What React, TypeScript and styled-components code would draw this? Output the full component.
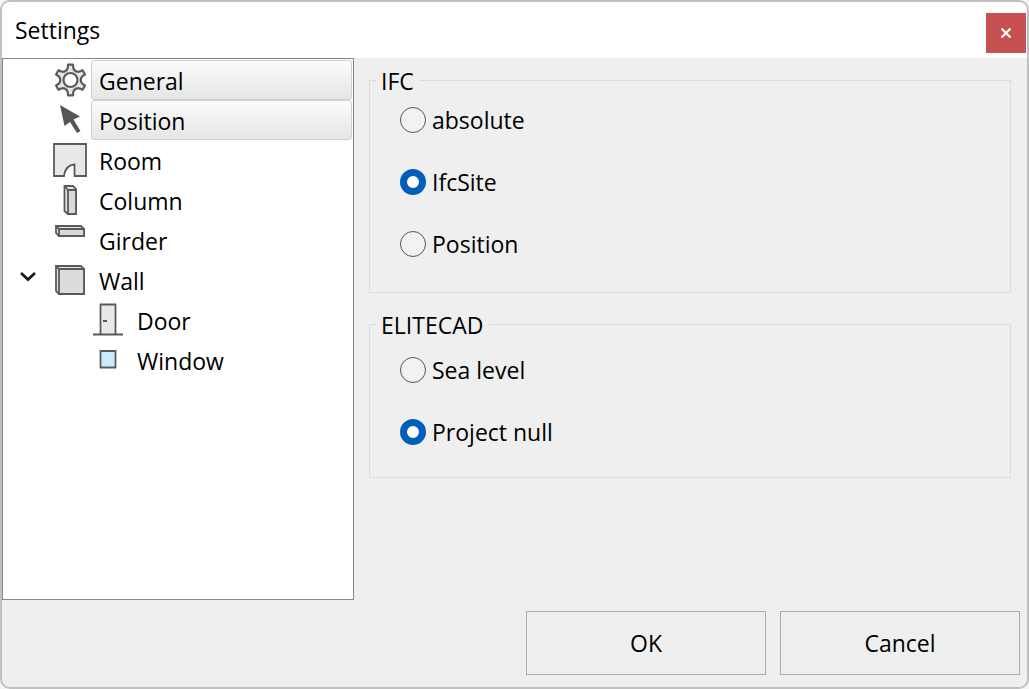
import React, { useState } from "react";
import styled, { createGlobalStyle } from "styled-components";

const GlobalStyle = createGlobalStyle`
  *, *::before, *::after { box-sizing: border-box; }
  body { margin: 0; background: #f4f4f4; }
  body, button, input { font-family: "Open Sans", "Noto Sans", sans-serif; font-size: 23px; line-height: 32px; color: #000; }
`;

const Dialog = styled.div`
  display: flex;
  flex-direction: column;
  min-height: 100vh;
  border: 2px solid #c0c0c0;
  border-radius: 10px;
  background: #efefef;
  overflow: hidden;
`;

const TitleBar = styled.header`
  display: flex;
  align-items: center;
  justify-content: space-between;
  height: 56px;
  padding: 0 1px 0 13px;
  background: #fff;
`;

const Title = styled.h1`
  margin: 0;
  font-size: 23px;
  font-weight: 400;
`;

const CloseButton = styled.button`
  display: flex;
  align-items: center;
  justify-content: center;
  align-self: flex-end;
  width: 40px;
  height: 40px;
  margin-bottom: 5px;
  padding: 0;
  border: 0;
  background: #c75050;
`;

const Main = styled.main`
  display: flex;
  flex: 1;
`;

const Tree = styled.nav`
  flex: 0 0 352px;
  padding: 1px;
  border: 1px solid #828790;
  background: #fff;
`;

const TreeList = styled.ul`
  margin: 0;
  padding: 0;
  list-style: none;
`;

const TreeRow = styled.div<{ $level: number }>`
  display: flex;
  height: 40px;
  padding-left: ${(p) => (p.$level ? 85 : 0)}px;
`;

const Expander = styled.button`
  display: flex;
  width: 47px;
  padding: 10px 0 0 16px;
  border: 0;
  background: none;
`;

const ExpanderSpace = styled.span`
  width: 47px;
`;

const IconBox = styled.span`
  display: flex;
  width: 40px;
`;

const TreeLabel = styled.button<{ $active: boolean }>`
  flex: 1;
  padding: 2px 7px 0;
  border: 1px solid ${(p) => (p.$active ? "#d0d0d0" : "transparent")};
  border-radius: 3px;
  background: ${(p) => (p.$active ? "linear-gradient(#fcfcfc, #e5e5e5)" : "none")};
  text-align: left;
`;

const Panel = styled.section`
  display: flex;
  flex: 1;
  flex-direction: column;
  gap: 14px;
  padding: 5px 16px 16px 15px;
`;

const Group = styled.fieldset<{ $top: number; $bottom: number }>`
  min-width: 0;
  margin: 0;
  padding: ${(p) => p.$top}px 30px ${(p) => p.$bottom}px;
  border: 1px solid #dcdcdc;
`;

const Legend = styled.legend`
  margin-left: -24px;
  padding: 2px 6px 0 5px;
`;

const Options = styled.div`
  display: flex;
  flex-direction: column;
  align-items: flex-start;
  gap: 30px;
`;

const Option = styled.label`
  display: flex;
  align-items: center;
  gap: 6px;
`;

const Radio = styled.input`
  appearance: none;
  width: 26px;
  height: 26px;
  margin: 0;
  border: 1px solid #565656;
  border-radius: 50%;
  background: #f2f2f2;

  &:checked {
    border: 7px solid #005fb8;
    background: #fff;
  }
`;

const Footer = styled.footer`
  display: flex;
  justify-content: flex-end;
  gap: 14px;
  padding: 11px 7px 12px;
`;

const ActionButton = styled.button`
  width: 240px;
  height: 64px;
  padding: 0;
  border: 1px solid #adadad;
  background: #efefef;
`;

type IconName = "gear" | "arrow" | "room" | "column" | "girder" | "wall" | "door" | "window";

const gearPath = (() => {
  const pts: string[] = [];
  for (let i = 0; i < 6; i++) {
    const profile: [number, number][] = [[-22, 10.5], [-14, 12], [-9, 15.5], [9, 15.5], [14, 12], [22, 10.5]];
    profile.forEach(([deg, r]) => {
      const a = ((i * 60 - 90 + deg) * Math.PI) / 180;
      pts.push(`${(19.5 + r * Math.cos(a)).toFixed(2)} ${(20 + r * Math.sin(a)).toFixed(2)}`);
    });
  }
  return `M${pts.join("L")}Z`;
})();

const shapes: Record<IconName, React.ReactNode> = {
  gear: (
    <>
      <path d={gearPath} fill="#e4e4e4" strokeLinejoin="round" />
      <circle cx="19.5" cy="20" r="7" fill="#fff" />
    </>
  ),
  arrow: <path d="M9 5L29 16.500L22.500 19.500L29.500 31L26 33L19 22L13.500 26Z" fill="#555" stroke="none" />,
  room: <path d="M3 4H35V36H23.500V24.500Q14.500 25 13 36H3Z" fill="#e8e8e8" />,
  column: (
    <>
      <path d="M13.500 6H22L25 9V34H17L13.500 31Z" fill="#e6e6e6" />
      <path d="M17 10H25V34H17Z" fill="#d9d9d9" />
      <path d="M13.500 6L17 10" />
    </>
  ),
  girder: (
    <>
      <path d="M5 6H30L33 9V16H8L5 13Z" fill="#e6e6e6" />
      <path d="M8 9H33V16H8Z" fill="#d9d9d9" />
      <path d="M5 6L8 9" />
    </>
  ),
  wall: (
    <>
      <path d="M5 6H30L33 9V34H8L5 31Z" fill="#e6e6e6" />
      <path d="M8 9H33V34H8Z" fill="#dcdcdc" />
      <path d="M5 6L8 9" />
    </>
  ),
  door: (
    <>
      <path d="M11.500 34V4.500H26.500V34" fill="#e8e8e8" />
      <path d="M4 34.500H34M14 21H18" />
    </>
  ),
  window: <path d="M11.500 11H26.500V27.500H11.500Z" fill="#cceaff" />,
};

const Icon = ({ name }: { name: IconName }) => (
  <svg width="38" height="40" viewBox="0 0 38 40" fill="none" stroke="#5a5a5a" strokeWidth={name === "gear" ? 2.2 : 1.8} aria-hidden="true">
    {shapes[name]}
  </svg>
);

interface Item {
  label: string;
  icon: IconName;
  active?: boolean;
  children?: Item[];
}

const items: Item[] = [
  { label: "General", icon: "gear", active: true },
  { label: "Position", icon: "arrow", active: true },
  { label: "Room", icon: "room" },
  { label: "Column", icon: "column" },
  { label: "Girder", icon: "girder" },
  {
    label: "Wall",
    icon: "wall",
    children: [
      { label: "Door", icon: "door" },
      { label: "Window", icon: "window" },
    ],
  },
];

const TreeItem = ({ item, level = 0 }: { item: Item; level?: number }) => {
  const [open, setOpen] = useState(true);
  return (
    <li>
      <TreeRow $level={level}>
        {item.children ? (
          <Expander type="button" aria-label="Toggle" aria-expanded={open} onClick={() => setOpen(!open)}>
            <svg width="17" height="14" viewBox="0 0 17 14" fill="none" stroke="#1a1a1a" strokeWidth="2.800">
              <path d="M1 3L8 9.500L15 3" />
            </svg>
          </Expander>
        ) : (
          level === 0 && <ExpanderSpace />
        )}
        <IconBox>
          <Icon name={item.icon} />
        </IconBox>
        <TreeLabel type="button" $active={!!item.active}>
          {item.label}
        </TreeLabel>
      </TreeRow>
      {item.children && open && (
        <TreeList>
          {item.children.map((child) => (
            <TreeItem key={child.label} item={child} level={level + 1} />
          ))}
        </TreeList>
      )}
    </li>
  );
};

interface RadioGroupProps {
  legend: string;
  options: string[];
  initial: string;
  top: number;
  bottom: number;
}

const RadioGroup = ({ legend, options, initial, top, bottom }: RadioGroupProps) => {
  const [value, setValue] = useState(initial);
  return (
    <Group $top={top} $bottom={bottom}>
      <Legend>{legend}</Legend>
      <Options>
        {options.map((option) => (
          <Option key={option}>
            <Radio type="radio" name={legend} checked={value === option} onChange={() => setValue(option)} />
            {option}
          </Option>
        ))}
      </Options>
    </Group>
  );
};

export default function App() {
  return (
    <>
      <GlobalStyle />
      <Dialog role="dialog" aria-label="Settings">
        <TitleBar>
          <Title>Settings</Title>
          <CloseButton type="button" aria-label="Close">
            <svg width="12" height="10" viewBox="0 0 12 10" stroke="#fff" strokeWidth="2.200" aria-hidden="true">
              <path d="M1.500 0.500L10.500 9.500M10.500 0.500L1.500 9.500" />
            </svg>
          </CloseButton>
        </TitleBar>
        <Main>
          <Tree aria-label="Categories">
            <TreeList>
              {items.map((item) => (
                <TreeItem key={item.label} item={item} />
              ))}
            </TreeList>
          </Tree>
          <Panel>
            <RadioGroup legend="IFC" options={["absolute", "IfcSite", "Position"]} initial="IfcSite" top={7} bottom={32} />
            <RadioGroup legend="ELITECAD" options={["Sea level", "Project null"]} initial="Project null" top={13} bottom={29} />
          </Panel>
        </Main>
        <Footer>
          <ActionButton type="button">OK</ActionButton>
          <ActionButton type="button">Cancel</ActionButton>
        </Footer>
      </Dialog>
    </>
  );
}
